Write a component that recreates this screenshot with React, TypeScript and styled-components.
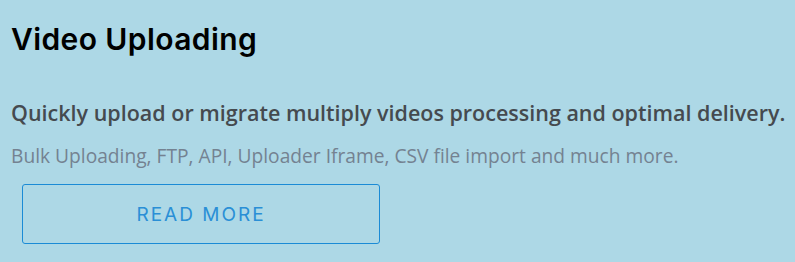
import React from "react";
import styled, { createGlobalStyle } from "styled-components";

const Global = createGlobalStyle`
  html, body { margin: 0; padding: 0; background: #add8e6; }
  body { width: 795px; height: 262px; overflow: hidden; }
`;

const Section = styled.section`
  display: flex;
  flex-direction: column;
  align-items: flex-start;
  padding: 19px 0 0 11px;
`;

const Title = styled.h2`
  margin: 0;
  font-family: Inter, "Noto Sans", sans-serif;
  font-weight: 600;
  font-size: 30px;
  line-height: 40px;
  color: #000;
  letter-spacing: 0.4px;
`;

const Lead = styled.p`
  margin: 39px 0 0 0;
  font-family: "Open Sans", sans-serif;
  font-weight: 600;
  font-size: 21.5px;
  line-height: 30px;
  color: #454a4f;
  white-space: nowrap;
`;

const Note = styled.p`
  margin: 15px 0 0 0;
  font-family: "Open Sans", sans-serif;
  font-weight: 400;
  font-size: 19.2px;
  line-height: 26px;
  color: #748291;
  white-space: nowrap;
`;

const Button = styled.a`
  display: flex;
  align-items: center;
  justify-content: center;
  box-sizing: border-box;
  width: 358px;
  height: 60px;
  margin: 15px 0 0 11px;
  border: 1px solid #1b8bd6;
  border-radius: 3px;
  font-family: Inter, "Noto Sans", sans-serif;
  font-weight: 400;
  font-size: 19px;
  letter-spacing: 2px;
  color: #2a8fd6;
  text-decoration: none;
  text-transform: uppercase;
`;

export default function App() {
  return (
    <>
      <Global />
      <Section>
        <Title>Video Uploading</Title>
        <Lead>Quickly upload or migrate multiply videos processing and optimal delivery.</Lead>
        <Note>Bulk Uploading, FTP, API, Uploader Iframe, CSV file import and much more.</Note>
        <Button href="#">Read More</Button>
      </Section>
    </>
  );
}
